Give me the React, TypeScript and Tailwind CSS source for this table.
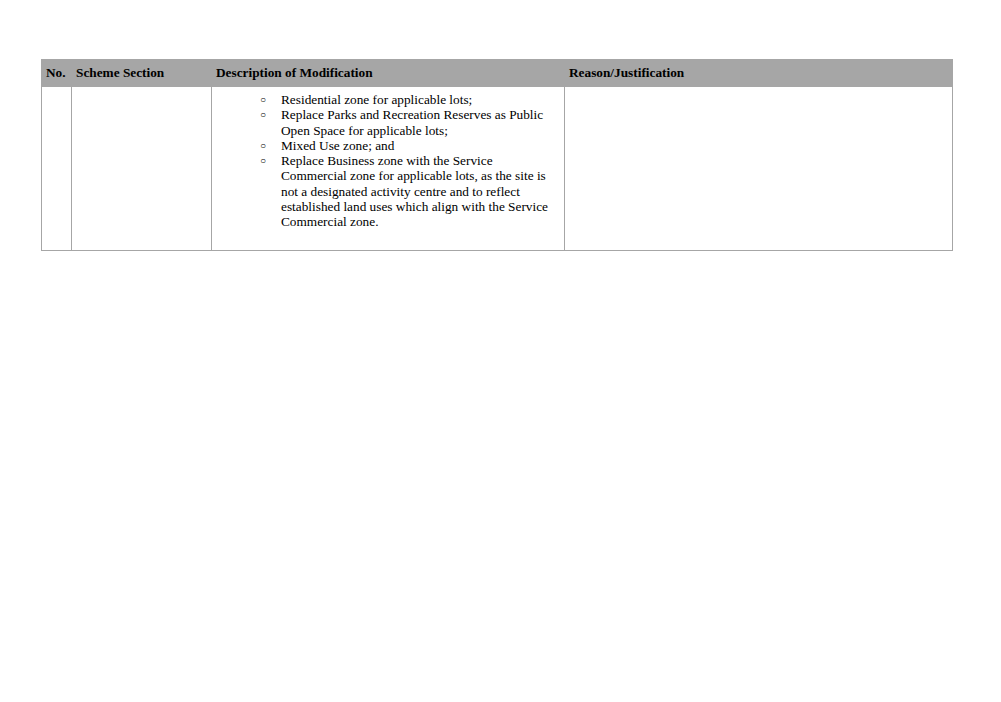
import React from "react";

export default function App() {
  const items = [
    "Residential zone for applicable lots;",
    "Replace Parks and Recreation Reserves as Public Open Space for applicable lots;",
    "Mixed Use zone; and",
    "Replace Business zone with the Service Commercial zone for applicable lots, as the site is not a designated activity centre and to reflect established land uses which align with the Service Commercial zone.",
  ];
  return (
    <div className="w-[1001px] h-[702px] bg-white pt-[59px] pl-[41px] text-black" style={{ fontFamily: '"Liberation Serif", "Times New Roman", serif' }}>
      <table className="border-collapse table-fixed w-[911px] text-[13.3px] leading-[15.3px]">
        <colgroup>
          <col className="w-[30px]" />
          <col className="w-[140px]" />
          <col className="w-[353px]" />
          <col className="w-[388px]" />
        </colgroup>
        <thead>
          <tr className="bg-[#a6a6a6] h-[27px]">
            <th className="border border-[#a6a6a6] text-left font-bold px-[4px] py-0 align-middle">No.</th>
            <th className="border border-[#a6a6a6] text-left font-bold px-[4px] py-0 align-middle">Scheme Section</th>
            <th className="border border-[#a6a6a6] text-left font-bold px-[4px] py-0 align-middle">Description of Modification</th>
            <th className="border border-[#a6a6a6] text-left font-bold px-[4px] py-0 align-middle">Reason/Justification</th>
          </tr>
        </thead>
        <tbody>
          <tr className="h-[164px]">
            <td className="border border-[#a6a6a6] align-top"></td>
            <td className="border border-[#a6a6a6] align-top"></td>
            <td className="border border-[#a6a6a6] align-top pt-[5px] pr-[5px] pb-[20px]">
              <ul className="pl-[69px]">
                {items.map((t, i) => (
                  <li key={i} className="relative">
                    <span className="absolute left-[-21px] top-[0px] text-[10px]">○</span>
                    {t}
                  </li>
                ))}
              </ul>
            </td>
            <td className="border border-[#a6a6a6] align-top"></td>
          </tr>
        </tbody>
      </table>
    </div>
  );
}
